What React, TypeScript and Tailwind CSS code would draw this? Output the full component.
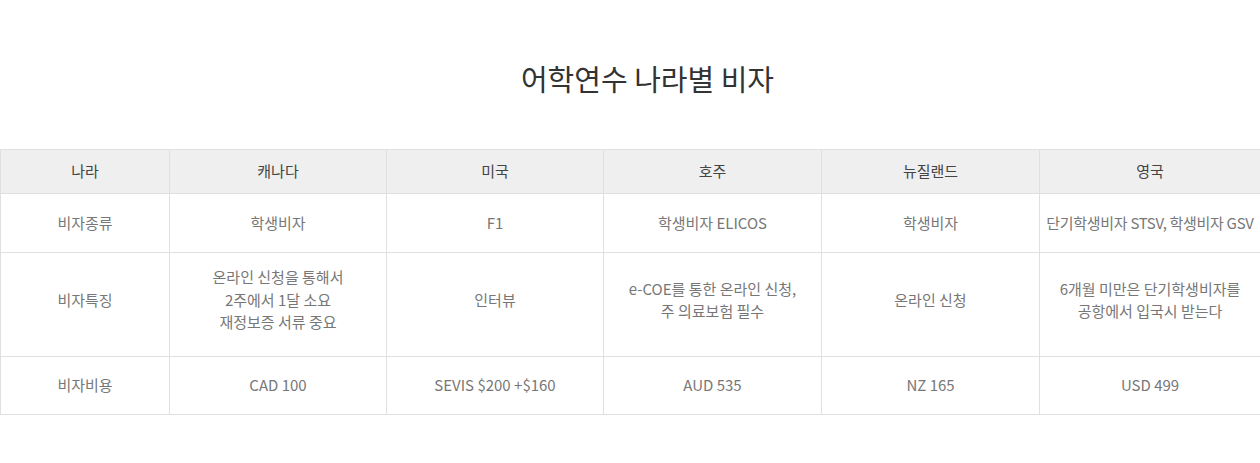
import React from "react";

const font = { fontFamily: '"Noto Sans CJK KR", sans-serif' };

const headers = ["나라", "캐나다", "미국", "호주", "뉴질랜드", "영국"];
const rows: { h: string; pad: string; cells: React.ReactNode[] }[] = [
  {
    h: "h-[59px]",
    pad: "",
    cells: [
      "비자종류",
      "학생비자",
      "F1",
      "학생비자 ELICOS",
      "학생비자",
      <span className="tracking-[-0.3px]">단기학생비자 STSV, 학생비자 GSV</span>,
    ],
  },
  {
    h: "h-[104px]",
    pad: "pb-[9px]",
    cells: [
      "비자특징",
      <>온라인 신청을 통해서<br />2주에서 1달 소요<br />재정보증 서류 중요</>,
      "인터뷰",
      <>e-COE를 통한 온라인 신청,<br />주 의료보험 필수</>,
      "온라인 신청",
      <>6개월 미만은 단기학생비자를<br />공항에서 입국시 받는다</>,
    ],
  },
  {
    h: "h-[58px]",
    pad: "",
    cells: ["비자비용", "CAD 100", "SEVIS $200 +$160", "AUD 535", "NZ 165", "USD 499"],
  },
];

export default function App() {
  return (
    <div className="w-[1260px] bg-white" style={font}>
      <h2 className="pt-[60px] pl-[35px] text-center text-[29px] leading-[37px] text-[#333] font-normal">
        어학연수 나라별 비자
      </h2>
      <table className="mt-[52px] w-[1260px] table-fixed border-collapse">
        <colgroup>
          <col className="w-[169px]" />
          <col className="w-[217px]" />
          <col className="w-[217px]" />
          <col className="w-[218px]" />
          <col className="w-[218px]" />
          <col className="w-[221px]" />
        </colgroup>
        <thead>
          <tr className="h-[44px] bg-[#efefef]">
            {headers.map((t) => (
              <th key={t} className="border border-[#e0e0e0] text-center text-[15px] font-normal text-[#444]">
                {t}
              </th>
            ))}
          </tr>
        </thead>
        <tbody>
          {rows.map((r, i) => (
            <tr key={i} className={r.h}>
              {r.cells.map((c, j) => (
                <td
                  key={j}
                  className={`border border-[#e0e0e0] text-center align-middle text-[15px] font-normal leading-[22.5px] text-[#777] whitespace-nowrap ${r.pad}`}
                >
                  {c}
                </td>
              ))}
            </tr>
          ))}
        </tbody>
      </table>
    </div>
  );
}
